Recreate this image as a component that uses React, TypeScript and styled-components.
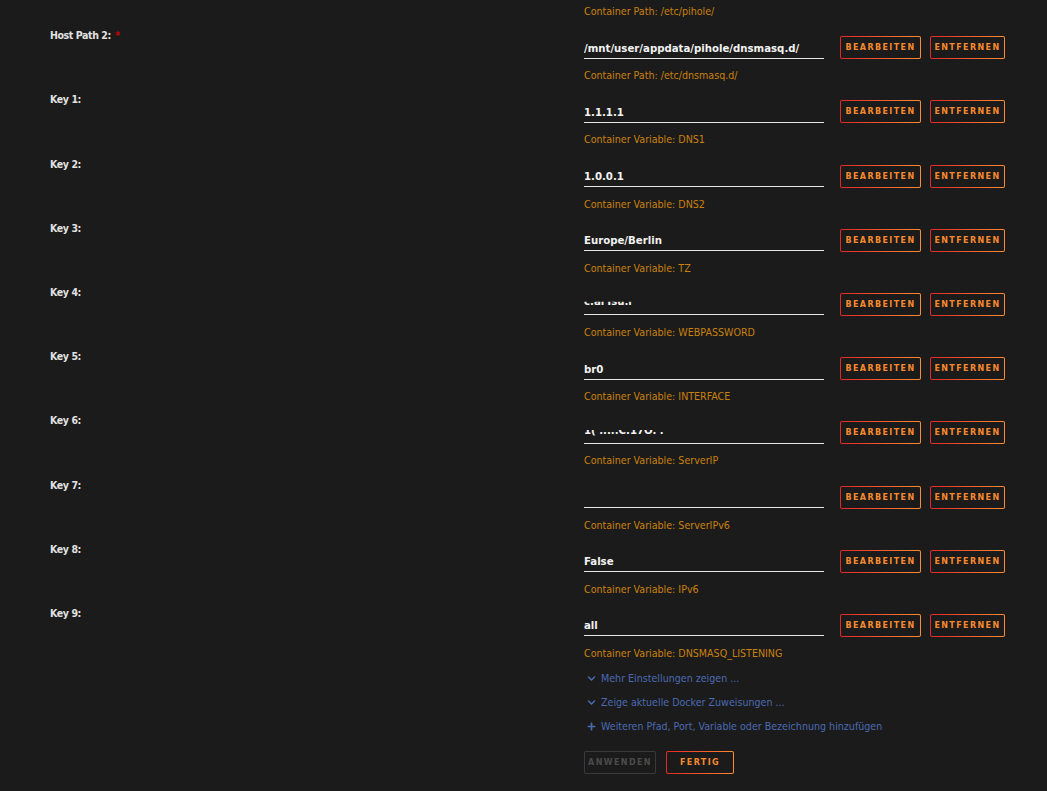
import React from 'react';
import styled, { createGlobalStyle } from 'styled-components';
import { FaChevronDown, FaPlus } from 'react-icons/fa';

const GlobalStyle = createGlobalStyle`
  html, body {
    margin: 0;
    padding: 0;
    background: #1c1b1b;
  }
  body {
    font-family: "DejaVu Sans Condensed", "Liberation Sans Narrow", "Liberation Sans", sans-serif;
  }
`;

interface Setting {
  label: string;
  required?: boolean;
  value: string;
  hint: string;
  masked?: boolean;
}

const settings: Setting[] = [
  { label: 'Host Path 2:', required: true, value: '/mnt/user/appdata/pihole/dnsmasq.d/', hint: 'Container Path: /etc/dnsmasq.d/' },
  { label: 'Key 1:', value: '1.1.1.1', hint: 'Container Variable: DNS1' },
  { label: 'Key 2:', value: '1.0.0.1', hint: 'Container Variable: DNS2' },
  { label: 'Key 3:', value: 'Europe/Berlin', hint: 'Container Variable: TZ' },
  { label: 'Key 4:', value: 'c.arTsu.i', hint: 'Container Variable: WEBPASSWORD', masked: true },
  { label: 'Key 5:', value: 'br0', hint: 'Container Variable: INTERFACE' },
  { label: 'Key 6:', value: '1( .....C.17O. .', hint: 'Container Variable: ServerIP', masked: true },
  { label: 'Key 7:', value: '', hint: 'Container Variable: ServerIPv6' },
  { label: 'Key 8:', value: 'False', hint: 'Container Variable: IPv6' },
  { label: 'Key 9:', value: 'all', hint: 'Container Variable: DNSMASQ_LISTENING' },
];

const Page = styled.div`
  padding: 3px 0 20px 0;
  min-height: 768px;
  background: #1c1b1b;
`;

const Row = styled.div`
  display: grid;
  grid-template-columns: 534px 1fr;
  padding-left: 50px;
`;

const Label = styled.div`
  padding-top: 1px;
  font-size: 10.5px;
  line-height: 16px;
  font-weight: bold;
  letter-spacing: -0.4px;
  color: #e2e2e2;
`;

const Required = styled.span`
  color: #cc0000;
  margin-left: 4px;
`;

const Field = styled.div<{ $top: number }>`
  padding-top: ${p => p.$top}px;
  padding-bottom: 7.2px;
`;

const Controls = styled.div`
  display: flex;
  align-items: center;
  height: 23px;
`;

const InputLine = styled.div`
  width: 240px;
  height: 22px;
  box-sizing: border-box;
  border-bottom: 1px solid #e6e6e6;
  margin-right: 16px;
  padding-bottom: 2px;
  display: flex;
  align-items: flex-end;
  overflow: hidden;
`;

const Value = styled.span<{ $masked?: boolean }>`
  font-size: 11.3px;
  line-height: 14px;
  font-weight: bold;
  color: #f2f2f2;
  white-space: nowrap;
  ${p => p.$masked && 'clip-path: inset(45% 0 0 0); transform: translateY(-3px);'}
`;

const GradientButton = styled.button<{ $width: number; $disabled?: boolean }>`
  width: ${p => p.$width}px;
  height: 23px;
  box-sizing: border-box;
  padding: 0;
  border: 1px solid transparent;
  border-radius: 2px;
  background: ${p =>
    p.$disabled
      ? 'linear-gradient(#1c1b1b, #1c1b1b) padding-box, linear-gradient(#3a3a3a, #3a3a3a) border-box'
      : 'linear-gradient(#1c1b1b, #1c1b1b) padding-box, linear-gradient(90deg, #e22828, #ff8c2f) border-box'};
  color: ${p => (p.$disabled ? '#4b4b4b' : '#f68a2e')};
  font-family: "DejaVu Sans", "Liberation Sans", sans-serif;
  font-size: 8px;
  font-weight: bold;
  letter-spacing: 1.4px;
  text-transform: uppercase;
  margin-right: 9px;
  cursor: pointer;
`;

const Hint = styled.div`
  margin-top: 8px;
  font-size: 10.6px;
  line-height: 16px;
  color: #c9810e;
`;

const Actions = styled.div`
  padding-left: 584px;
`;

const LinkRow = styled.div`
  display: flex;
  align-items: center;
  gap: 5px;
  height: 24px;
  font-size: 10.6px;
  color: #4a6ab3;
  svg {
    width: 9px;
    height: 9px;
    margin-left: 3px;
  }
`;

const ButtonBar = styled.div`
  display: flex;
  margin-top: 13px;
`;

const Masked: React.FC<{ text: string; masked?: boolean }> = ({ text, masked }) => (
  <Value $masked={masked}>{text}</Value>
);

const App: React.FC = () => {
  return (
    <Page>
      <GlobalStyle />
      <Row>
        <div />
        <Field $top={0}>
          <Hint style={{ marginTop: 0 }}>Container Path: /etc/pihole/</Hint>
        </Field>
      </Row>
      {settings.map((s) => (
        <Row key={s.label}>
          <Label>
            {s.label}
            {s.required && <Required>*</Required>}
          </Label>
          <Field $top={10}>
            <Controls>
              <InputLine>
                <Masked text={s.value} masked={s.masked} />
              </InputLine>
              <GradientButton $width={81}>Bearbeiten</GradientButton>
              <GradientButton $width={75}>Entfernen</GradientButton>
            </Controls>
            <Hint>{s.hint}</Hint>
          </Field>
        </Row>
      ))}
      <Actions>
        <LinkRow style={{ marginTop: -2 }}>
          <FaChevronDown />
          Mehr Einstellungen zeigen ...
        </LinkRow>
        <LinkRow>
          <FaChevronDown />
          Zeige aktuelle Docker Zuweisungen ...
        </LinkRow>
        <LinkRow>
          <FaPlus />
          Weiteren Pfad, Port, Variable oder Bezeichnung hinzufügen
        </LinkRow>
        <ButtonBar>
          <GradientButton $width={72} $disabled>Anwenden</GradientButton>
          <GradientButton $width={68} style={{ marginLeft: 1 }}>Fertig</GradientButton>
        </ButtonBar>
      </Actions>
    </Page>
  );
};

export default App;
